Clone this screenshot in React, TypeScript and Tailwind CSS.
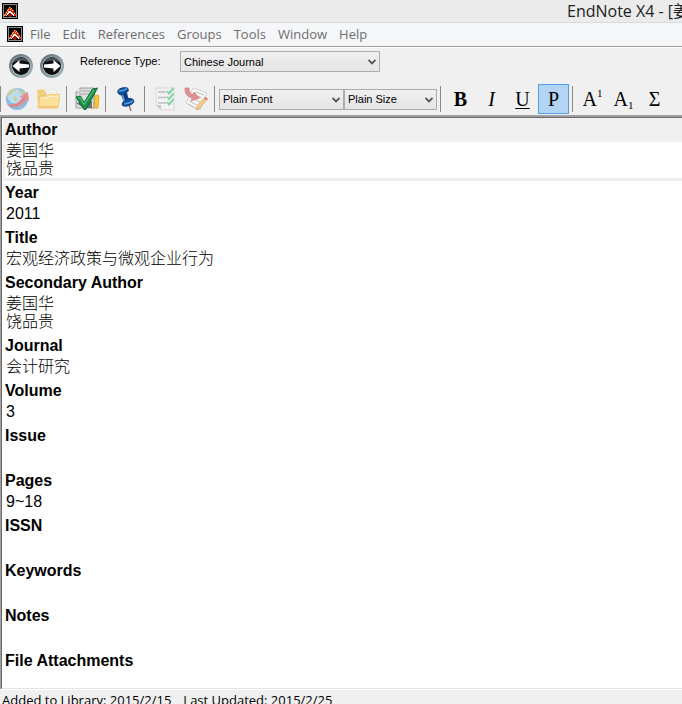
import { ReactNode, useState } from "react";

interface Field {
  id: string;
  label: string;
  value: string;
}

const MENU = ["File", "Edit", "References", "Groups", "Tools", "Window", "Help"];

const FIELDS: Field[] = [
  { id: "author", label: "Author", value: "姜国华\n饶品贵" },
  { id: "year", label: "Year", value: "2011" },
  { id: "title", label: "Title", value: "宏观经济政策与微观企业行为" },
  { id: "secondary-author", label: "Secondary Author", value: "姜国华\n饶品贵" },
  { id: "journal", label: "Journal", value: "会计研究" },
  { id: "volume", label: "Volume", value: "3" },
  { id: "issue", label: "Issue", value: "" },
  { id: "pages", label: "Pages", value: "9~18" },
  { id: "issn", label: "ISSN", value: "" },
  { id: "keywords", label: "Keywords", value: "" },
  { id: "notes", label: "Notes", value: "" },
  { id: "attachments", label: "File Attachments", value: "" },
];

function AppIcon() {
  return (
    <svg viewBox="0 0 16 16" className="w-4 h-4 shrink-0" aria-hidden="true" shapeRendering="crispEdges">
      <rect width="16" height="16" fill="#000" />
      <rect x="1" y="1" width="14" height="14" fill="#8c8c8c" />
      <rect x="2" y="2" width="12" height="12" fill="#000" />
      {/* Outer band, checkered red and yellow */}
      <path d="M7 4h2v1h1v1h1v1h1v2h1v2h1v2h-2v-2h-1v-1h-1V9H9V8H7v1H6v1H5v2H4v1H2v-2h1V9h1V8h1V6h1V5h1z" fill="#e0241c" />
      <path d="M7 4h1v1H7zM6 6h1v1H6zM8 6h1v1H8zM5 7h1v1H5zM4 9h1v1H4zM6 8h1v1H6zM3 11h1v1H3zM2 12h1v1H2zM9 5h1v1H9zM10 7h1v1h-1zM12 10h1v1h-1z" fill="#ffe14a" />
      {/* Inner band */}
      <path d="M7 8h2v1h1v1h1v1h1v2h-1v-1h-1v-1H9v-1H7v1H6v1H5v1H4v-1h1v-2h1V9h1z" fill="#fff" />
      <path d="M7 10h2v1h1v2H9v1H7v-1H6v-2h1z" fill="#a01010" />
    </svg>
  );
}

function NavIcon({ forward = false }: { forward?: boolean }) {
  const id = forward ? "nav-next" : "nav-prev";
  return (
    <svg viewBox="0 0 26 26" className="w-[26px] h-[26px]" aria-hidden="true">
      <defs>
        <linearGradient id={id} x1="0" y1="0" x2="1" y2="1">
          <stop offset="0" stopColor="#5c6c74" />
          <stop offset="0.45" stopColor="#7f9098" />
          <stop offset="1" stopColor="#a9b9bf" />
        </linearGradient>
      </defs>
      <circle cx="13" cy="13" r="12" fill={`url(#${id})`} />
      <circle cx="13" cy="13" r="9.6" fill="#c8d2d6" />
      <circle cx="13" cy="13" r="9" fill="#0b0d0e" />
      <path d="M5 9.5a9 9 0 0 1 16 0c-5-2.500-11-2.500-16 0z" fill="#4a5458" />
      <path
        d={forward ? "M21.500 13l-7-6v3.500L5 11.500v3l9.500 1V19z" : "M4.500 13l7-6v3.500l9.500 1v3l-9.500 1V19z"}
        fill="#fff"
      />
    </svg>
  );
}

function GlobeIcon() {
  return (
    <svg viewBox="0 0 24 24" className="w-6 h-6" aria-hidden="true">
      <circle cx="12" cy="12" r="11" fill="#8dbbe0" />
      <circle cx="10" cy="9" r="7.500" fill="#bcdcf1" />
      <path d="M4 4.500c3-2 6-3 8-2.500l-1 2-3 1-1 2-3 1.500-1 2-1-1c0-2 0-3 2-5z" fill="#c3cfa0" />
      <path d="M14 2.500l4 1.500c2 1.500 2.500 2.500 3 4l-3 0-3-1.500-1-2z" fill="#c3cfa0" />
      <path d="M8 9l3 1 2 2-2 2.500-2-1z" fill="#c3cfa0" />
      <path d="M2 17c6 2 12-1 15-6.500L14.500 10 23 5l1 9-2.500-1.500C17 20 7 23 2 17z" fill="#e08f92" />
      <path d="M4 18c6 2 12-1 15.500-7.500" fill="none" stroke="#d47c80" strokeWidth="1" />
    </svg>
  );
}

function FolderIcon() {
  return (
    <svg viewBox="0 0 24 24" className="w-6 h-6" aria-hidden="true">
      <path d="M1 4l1-1.500h6L9.500 5H20v15H2z" fill="#f2cf7c" />
      <path d="M10 4l9-2 3 9-10 2z" fill="#fbfbf6" stroke="#d9d6c9" strokeWidth="0.6" />
      <path d="M12 6l6-1M13 8l6-1" stroke="#cfd2d4" strokeWidth="0.7" />
      <path d="M4 9h6.500L12 7.500h12L22 21H2z" fill="#fce09a" stroke="#ebc36c" strokeWidth="0.8" />
      <path d="M5 11h6l1.500-1.500H22" fill="none" stroke="#fff3cf" strokeWidth="1" />
      <path d="M3 20h18.500" stroke="#efc169" strokeWidth="1.400" />
    </svg>
  );
}

function CheckIcon() {
  return (
    <svg viewBox="0 0 26 26" className="w-[26px] h-[26px]" aria-hidden="true">
      <path d="M17 9h7l1 2-1 11h-7z" fill="#f6c437" stroke="#d99e1c" strokeWidth="0.7" />
      <path d="M6 2h14v20H2V6z" fill="#dedede" stroke="#8c8c8c" strokeWidth="0.8" />
      <path d="M2 6h4V2" fill="#fff" stroke="#8c8c8c" strokeWidth="0.7" />
      <path d="M8 5h9M5 8h12" stroke="#aaa" strokeWidth="1" />
      <path d="M2 17l8 5h8v-7z" fill="#6f6f6f" />
      <path d="M2 11l4.500-1 3.500 6.500L18.500 3l5-1L12 23.500h-2z" fill="#169447" stroke="#08632c" strokeWidth="0.9" />
      <path d="M4 12l2-.5 4 7L20 4" fill="none" stroke="#55c277" strokeWidth="1.100" />
    </svg>
  );
}

function PinIcon() {
  return (
    <svg viewBox="0 0 20 24" className="w-5 h-6" aria-hidden="true">
      <path d="M13 18l2 6" stroke="#8a7769" strokeWidth="1.400" />
      <path
        d="M2 3.500C3 1 10-.5 12 1.500c1 2 0 3.500-1.500 4l1.500 6c3-.5 5.500.5 6 2.500.500 3-8 7-11.500 4.500-1-1.500 0-3.500 1.500-4.500L5.500 8C3 8 1 6 2 3.500z"
        fill="#0f4d96"
        stroke="#0b2e66"
        strokeWidth="0.7"
      />
      <path d="M6.500 7.500l3.500-1.500 1.500 6-3 2z" fill="#0b3576" />
      <path d="M3 3.500c2 1 5 0 8-2M6.500 8L8.500 14M8 17c3 0 6-1 9-3" fill="none" stroke="#4d9ae0" strokeWidth="1.600" />
    </svg>
  );
}

function ChecklistIcon() {
  return (
    <svg viewBox="0 0 20 24" className="w-5 h-6" aria-hidden="true">
      <path d="M1 1h18v22H6l-5-5z" fill="#f2f2f2" stroke="#d8d8d8" />
      <path d="M1 18h5v5z" fill="#c9c9c9" />
      <path d="M3 5h8M3 10.500h8M3 16h8" stroke="#bdbdbd" strokeWidth="1.500" />
      <path
        d="M12 4l2 2.500L18.500 1M12 9.500l2 2.500 4.500-5.500M12 15l2 2.500 4.500-5.500"
        fill="none"
        stroke="#84d3a6"
        strokeWidth="2"
      />
    </svg>
  );
}

function EditDocIcon() {
  return (
    <svg viewBox="0 0 24 24" className="w-6 h-6" aria-hidden="true">
      <path d="M9 1l14 5-7 17L2 16z" fill="#fafafa" stroke="#c8c8c8" strokeWidth="0.8" />
      <path d="M12 5l8 3M14 9l4 2M5 14l8 4M4 17l7 4M11 13l5 2" stroke="#bcbcbc" strokeWidth="1" />
      <path d="M1 1c0 6 2 9 7 9.500L7 14l8.500-3-5.500-6-1 2.500C6 7 5 4 5 1z" fill="#e08f90" stroke="#cf8080" strokeWidth="0.7" />
      <path d="M13 19l7-8 2.500 2-7 8.500-3.500 1.500z" fill="#f9c98a" stroke="#d9a060" strokeWidth="0.7" />
      <path d="M20 11l1.500-1.500L24 12l-1.500 1.500z" fill="#dc7f80" />
    </svg>
  );
}

function Separator() {
  return <div className="w-px h-[26px] ml-[3px] mr-1 bg-[#8a8a8a] shrink-0" />;
}

interface ToolButtonProps {
  label: string;
  active?: boolean;
  disabled?: boolean;
  children: ReactNode;
}

function ToolButton({ label, active = false, disabled = false, children }: ToolButtonProps) {
  return (
    <button
      type="button"
      aria-label={label}
      disabled={disabled}
      className={`w-[31px] h-[30px] shrink-0 flex items-center justify-center border font-['Liberation_Serif',serif] text-xl leading-5 text-black ${
        active ? "bg-[#b3d4f4] border-[#569de5]" : "border-transparent"
      }`}
    >
      {children}
    </button>
  );
}

interface DropDownProps {
  id: string;
  label: string;
  option: string;
  width: string;
}

function DropDown({ id, label, option, width }: DropDownProps) {
  return (
    <div className={`relative shrink-0 ${width}`}>
      <select
        id={id}
        aria-label={label}
        className="appearance-none block w-full h-[21px] pl-[3px] pr-4 border border-[#acacac] bg-linear-to-b from-[#f0f0f0] to-[#e5e5e5] text-[11px] leading-[18px] text-black"
      >
        <option>{option}</option>
      </select>
      <svg viewBox="0 0 8 6" className="absolute right-1 top-2 w-2 h-1.5 pointer-events-none" aria-hidden="true">
        <path d="M0.500 1L4 4.500 7.500 1" fill="none" stroke="#555" strokeWidth="1.800" />
      </svg>
    </div>
  );
}

function FieldRow({ field, active, onFocus }: { field: Field; active: boolean; onFocus: () => void }) {
  return (
    <div className={`pl-[2px] pb-[3px] ${active ? "bg-[#f0f0f0]" : "bg-white"}`}>
      <label htmlFor={field.id} className="block text-base leading-6 font-bold text-black">
        {field.label}
      </label>
      <textarea
        id={field.id}
        defaultValue={field.value}
        rows={field.value.split("\n").length}
        onFocus={onFocus}
        spellCheck={false}
        className="block w-full resize-none overflow-hidden bg-white pl-px text-base leading-[18px] font-light text-black outline-none"
      />
    </div>
  );
}

export default function App() {
  const [activeField, setActiveField] = useState("author");

  return (
    <div className="h-screen flex flex-col overflow-hidden bg-[#f0f0f0] font-['Liberation_Sans','Noto_Sans_CJK_SC',sans-serif]">
      {/* Title bar */}
      <header className="h-[23px] shrink-0 flex items-center justify-between overflow-hidden bg-[#ebebeb] border-b border-[#d7dbdf] pl-[2px]">
        <AppIcon />
        <h1 className="w-[115px] whitespace-nowrap font-['Open_Sans','Noto_Sans_CJK_SC',sans-serif] text-base leading-[22px] text-[#222]">
          EndNote X4 - [姜
        </h1>
      </header>

      {/* Menu */}
      <nav className="h-6 shrink-0 flex items-center gap-3 bg-[#f5f6f8] border-b border-[#a0a0a0] pl-[7px] pb-0.5 font-['Open_Sans',sans-serif] text-[13px] leading-5 text-[#6d6d6d]">
        <div className="flex items-center gap-[7px]">
          <AppIcon />
          <button type="button">{MENU[0]}</button>
        </div>
        {MENU.slice(1).map((item) => (
          <button key={item} type="button">
            {item}
          </button>
        ))}
      </nav>

      {/* Navigation and reference type */}
      <div className="h-9 shrink-0 flex items-start border-t border-white pl-2 pt-[3px]">
        <div className="flex gap-[5px] pt-[2px]">
          <button type="button" aria-label="Previous reference">
            <NavIcon />
          </button>
          <button type="button" aria-label="Next reference">
            <NavIcon forward />
          </button>
        </div>
        <label htmlFor="ref-type" className="w-[100px] ml-[15px] text-[11px] leading-5 text-black">
          Reference Type:
        </label>
        <DropDown id="ref-type" label="Reference Type" option="Chinese Journal" width="w-[200px]" />
      </div>

      {/* Formatting toolbar */}
      <div className="h-8 shrink-0 flex items-center">
        <div className="w-px h-[26px] bg-[#8a8a8a] shrink-0" />
        <ToolButton label="Online search" disabled>
          <GlobeIcon />
        </ToolButton>
        <ToolButton label="Open file" disabled>
          <FolderIcon />
        </ToolButton>
        <Separator />
        <ToolButton label="Spell check">
          <CheckIcon />
        </ToolButton>
        <Separator />
        <ToolButton label="Pin">
          <PinIcon />
        </ToolButton>
        <Separator />
        <ToolButton label="Review changes" disabled>
          <ChecklistIcon />
        </ToolButton>
        <ToolButton label="Edit document" disabled>
          <EditDocIcon />
        </ToolButton>
        <Separator />
        <DropDown id="font" label="Font" option="Plain Font" width="w-[125px]" />
        <DropDown id="size" label="Size" option="Plain Size" width="w-[93px]" />
        <Separator />
        <ToolButton label="Bold">
          <span className="font-bold">B</span>
        </ToolButton>
        <ToolButton label="Italic">
          <span className="italic">I</span>
        </ToolButton>
        <ToolButton label="Underline">
          <span className="underline decoration-1 underline-offset-2">U</span>
        </ToolButton>
        <ToolButton label="Plain" active>
          P
        </ToolButton>
        <Separator />
        <ToolButton label="Superscript">
          A<span className="self-start text-[11px] leading-4">1</span>
        </ToolButton>
        <ToolButton label="Subscript">
          A<span className="self-end text-[11px] leading-4">1</span>
        </ToolButton>
        <ToolButton label="Symbol">Σ</ToolButton>
      </div>

      {/* Reference fields */}
      <main className="flex-1 min-h-0 flex flex-col overflow-hidden border-l border-t-2 border-l-[#a0a0a0] border-t-[#a0a0a0]">
        <div className="flex-1 min-h-0 overflow-hidden bg-white border-l border-t border-[#696969] border-b border-b-[#e3e3e3] pl-px">
          {FIELDS.map((field) => (
            <FieldRow
              key={field.id}
              field={field}
              active={field.id === activeField}
              onFocus={() => setActiveField(field.id)}
            />
          ))}
        </div>
      </main>

      {/* Status bar */}
      <footer className="h-[15px] shrink-0 flex items-start gap-3 border-t border-white pl-[2px] font-['Open_Sans',sans-serif] text-[13px] leading-5 text-black">
        <span>Added to Library: 2015/2/15</span>
        <span>Last Updated: 2015/2/25</span>
      </footer>
    </div>
  );
}
